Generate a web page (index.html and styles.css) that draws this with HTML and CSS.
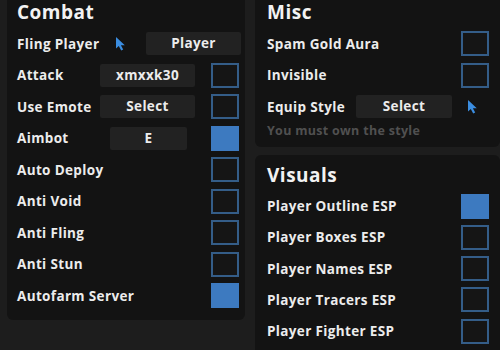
FILE: index.html
```html
<!DOCTYPE html>
<html lang="en">
<head>
    <meta charset="UTF-8">
    <title>Menu</title>
    <link rel="stylesheet" href="styles.css">
</head>
<body>
    <div class="board">
        <!-- left column -->
        <div class="panel combat">
            <h2>Combat</h2>
            <div class="row wide">
                <span class="label">Fling Player</span>
                <svg class="pointer" viewBox="0 0 12 15"><path d="M1 1 L1 12.5 L3.8 10 L6.2 14.6 L8.2 13.6 L5.9 9.2 L9.8 9.2 Z"/></svg>
                <div class="select">Player</div>
            </div>
            <div class="row">
                <span class="label">Attack</span>
                <div class="select">xmxxk30</div>
                <span class="check"></span>
            </div>
            <div class="row">
                <span class="label">Use Emote</span>
                <div class="select">Select</div>
                <span class="check"></span>
            </div>
            <div class="row">
                <span class="label">Aimbot</span>
                <div class="select keybind">E</div>
                <span class="check on"></span>
            </div>
            <div class="row"><span class="label">Auto Deploy</span><span class="check"></span></div>
            <div class="row"><span class="label">Anti Void</span><span class="check"></span></div>
            <div class="row"><span class="label">Anti Fling</span><span class="check"></span></div>
            <div class="row"><span class="label">Anti Stun</span><span class="check"></span></div>
            <div class="row"><span class="label">Autofarm Server</span><span class="check on"></span></div>
        </div>

        <!-- right column -->
        <div class="side">
            <div class="panel misc">
                <h2>Misc</h2>
                <div class="row"><span class="label">Spam Gold Aura</span><span class="check"></span></div>
                <div class="row"><span class="label">Invisible</span><span class="check"></span></div>
                <div class="row">
                    <span class="label">Equip Style</span>
                    <div class="select">Select</div>
                    <svg class="pointer" viewBox="0 0 12 15"><path d="M1 1 L1 12.5 L3.8 10 L6.2 14.6 L8.2 13.6 L5.9 9.2 L9.8 9.2 Z"/></svg>
                </div>
                <p class="hint">You must own the style</p>
            </div>
            <div class="panel visuals">
                <h2>Visuals</h2>
                <div class="row"><span class="label">Player Outline ESP</span><span class="check on"></span></div>
                <div class="row"><span class="label">Player Boxes ESP</span><span class="check"></span></div>
                <div class="row"><span class="label">Player Names ESP</span><span class="check"></span></div>
                <div class="row"><span class="label">Player Tracers ESP</span><span class="check"></span></div>
                <div class="row"><span class="label">Player Fighter ESP</span><span class="check"></span></div>
            </div>
        </div>
    </div>
</body>
</html>
```

FILE: styles.css
```css
body {
    margin: 0;
    background-color: #1d1d1d;
    font-family: "Open Sans", "Noto Sans", sans-serif;
    color: #ececec;
    overflow: hidden;
}
.board {
    display: grid;
    grid-template-columns: 238px 245px;
    column-gap: 10px;
    align-items: start;
    margin-top: -8px;
    padding-left: 7px;
}
.side {
    display: flex;
    flex-direction: column;
    gap: 8px;
}
.panel {
    background-color: #131313;
    border-radius: 6px;
    padding: 6px 6px 8px 10px;
}
.side .panel {
    padding: 6px 11px 8px 12px;
}
.visuals {
    padding-top: 5px;
}
h2 {
    margin: 0 0 2px 0;
    font-size: 19px;
    line-height: 28px;
    font-weight: 700;
    letter-spacing: 0.5px;
    color: #f2f2f2;
}
.row {
    display: flex;
    align-items: center;
    height: 31.5px;
}
.visuals .row {
    height: 31.25px;
}
.row.wide {
    margin-right: -2px;
}
.label {
    font-size: 13.5px;
    font-weight: 700;
    letter-spacing: 0.35px;
    white-space: nowrap;
    margin-right: auto;
}
.select {
    width: 95px;
    height: 23px;
    line-height: 23px;
    background-color: #222222;
    border-radius: 2px;
    text-align: center;
    font-size: 13.5px;
    font-weight: 700;
    letter-spacing: 0.35px;
}
.combat .select + .check {
    margin-left: 16px;
}
.select.keybind {
    width: 77px;
    margin-right: 8px;
}
.misc .select {
    width: 96px;
}
.pointer {
    width: 12px;
    height: 15px;
    fill: #3b8de0;
}
.combat .pointer {
    margin-right: 19px;
}
.misc .pointer {
    margin-left: 15px;
    margin-right: 10px;
}
.check {
    box-sizing: border-box;
    width: 28px;
    height: 25px;
    border: 2px solid #345d88;
    background-color: #151515;
}
.check.on {
    background-color: #3d7ac0;
    border-color: #3d7ac0;
}
.hint {
    margin: 0;
    font-size: 12.5px;
    font-weight: 700;
    letter-spacing: 0.3px;
    line-height: 16px;
    color: #505050;
}
```
